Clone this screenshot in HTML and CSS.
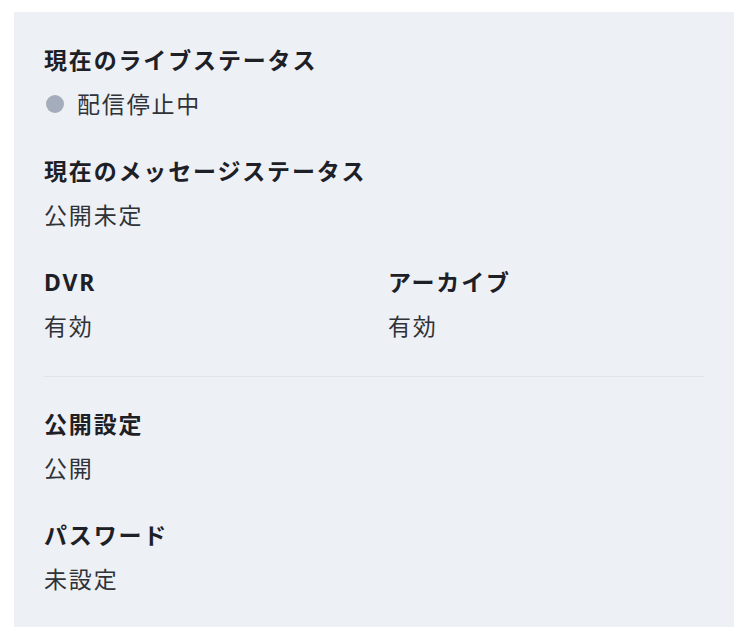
FILE: index.html
```html
<!DOCTYPE html>
<html lang="ja">
<head>
    <meta charset="UTF-8">
    <meta name="viewport" content="width=device-width, initial-scale=1.0">
    <title>配信ステータス</title>
    <link rel="stylesheet" href="styles.css">
</head>
<body>
    <div class="panel">
        <div class="item">
            <h3 class="label">現在のライブステータス</h3>
            <p class="value"><span class="dot"></span>配信停止中</p>
        </div>

        <div class="item">
            <h3 class="label">現在のメッセージステータス</h3>
            <p class="value">公開未定</p>
        </div>

        <div class="row">
            <div class="item">
                <h3 class="label">DVR</h3>
                <p class="value">有効</p>
            </div>
            <div class="item">
                <h3 class="label">アーカイブ</h3>
                <p class="value">有効</p>
            </div>
        </div>

        <hr class="divider">

        <div class="item">
            <h3 class="label">公開設定</h3>
            <p class="value">公開</p>
        </div>

        <div class="item">
            <h3 class="label">パスワード</h3>
            <p class="value">未設定</p>
        </div>
    </div>
</body>
</html>
```

FILE: styles.css
```css
body {
    margin: 0;
    background: #fff;
    font-family: "Noto Sans", "Noto Sans CJK JP", sans-serif;
}

.panel {
    margin: 12px 14px;
    padding: 32px 30px;
    background: #edf0f5;
    display: flex;
    flex-direction: column;
    gap: 35px;
}

.item {
    display: flex;
    flex-direction: column;
    gap: 12px;
}

.label {
    margin: 0;
    font-size: 23px;
    line-height: 32px;
    font-weight: 700;
    letter-spacing: 0.08em;
    color: #1d2026;
}

.value {
    margin: 0;
    font-size: 23px;
    line-height: 32px;
    font-weight: 400;
    letter-spacing: 0.08em;
    color: #2f3338;
    display: flex;
    align-items: center;
}

.dot {
    width: 18px;
    height: 18px;
    border-radius: 50%;
    background: #a3adbc;
    margin: 0 13px 0 2px;
}

.row {
    display: grid;
    grid-template-columns: 1fr 1fr;
    column-gap: 28px;
}

.divider {
    margin: -1px 0 -4px;
    border: 0;
    border-top: 1px solid #e1e4ea;
}
```
